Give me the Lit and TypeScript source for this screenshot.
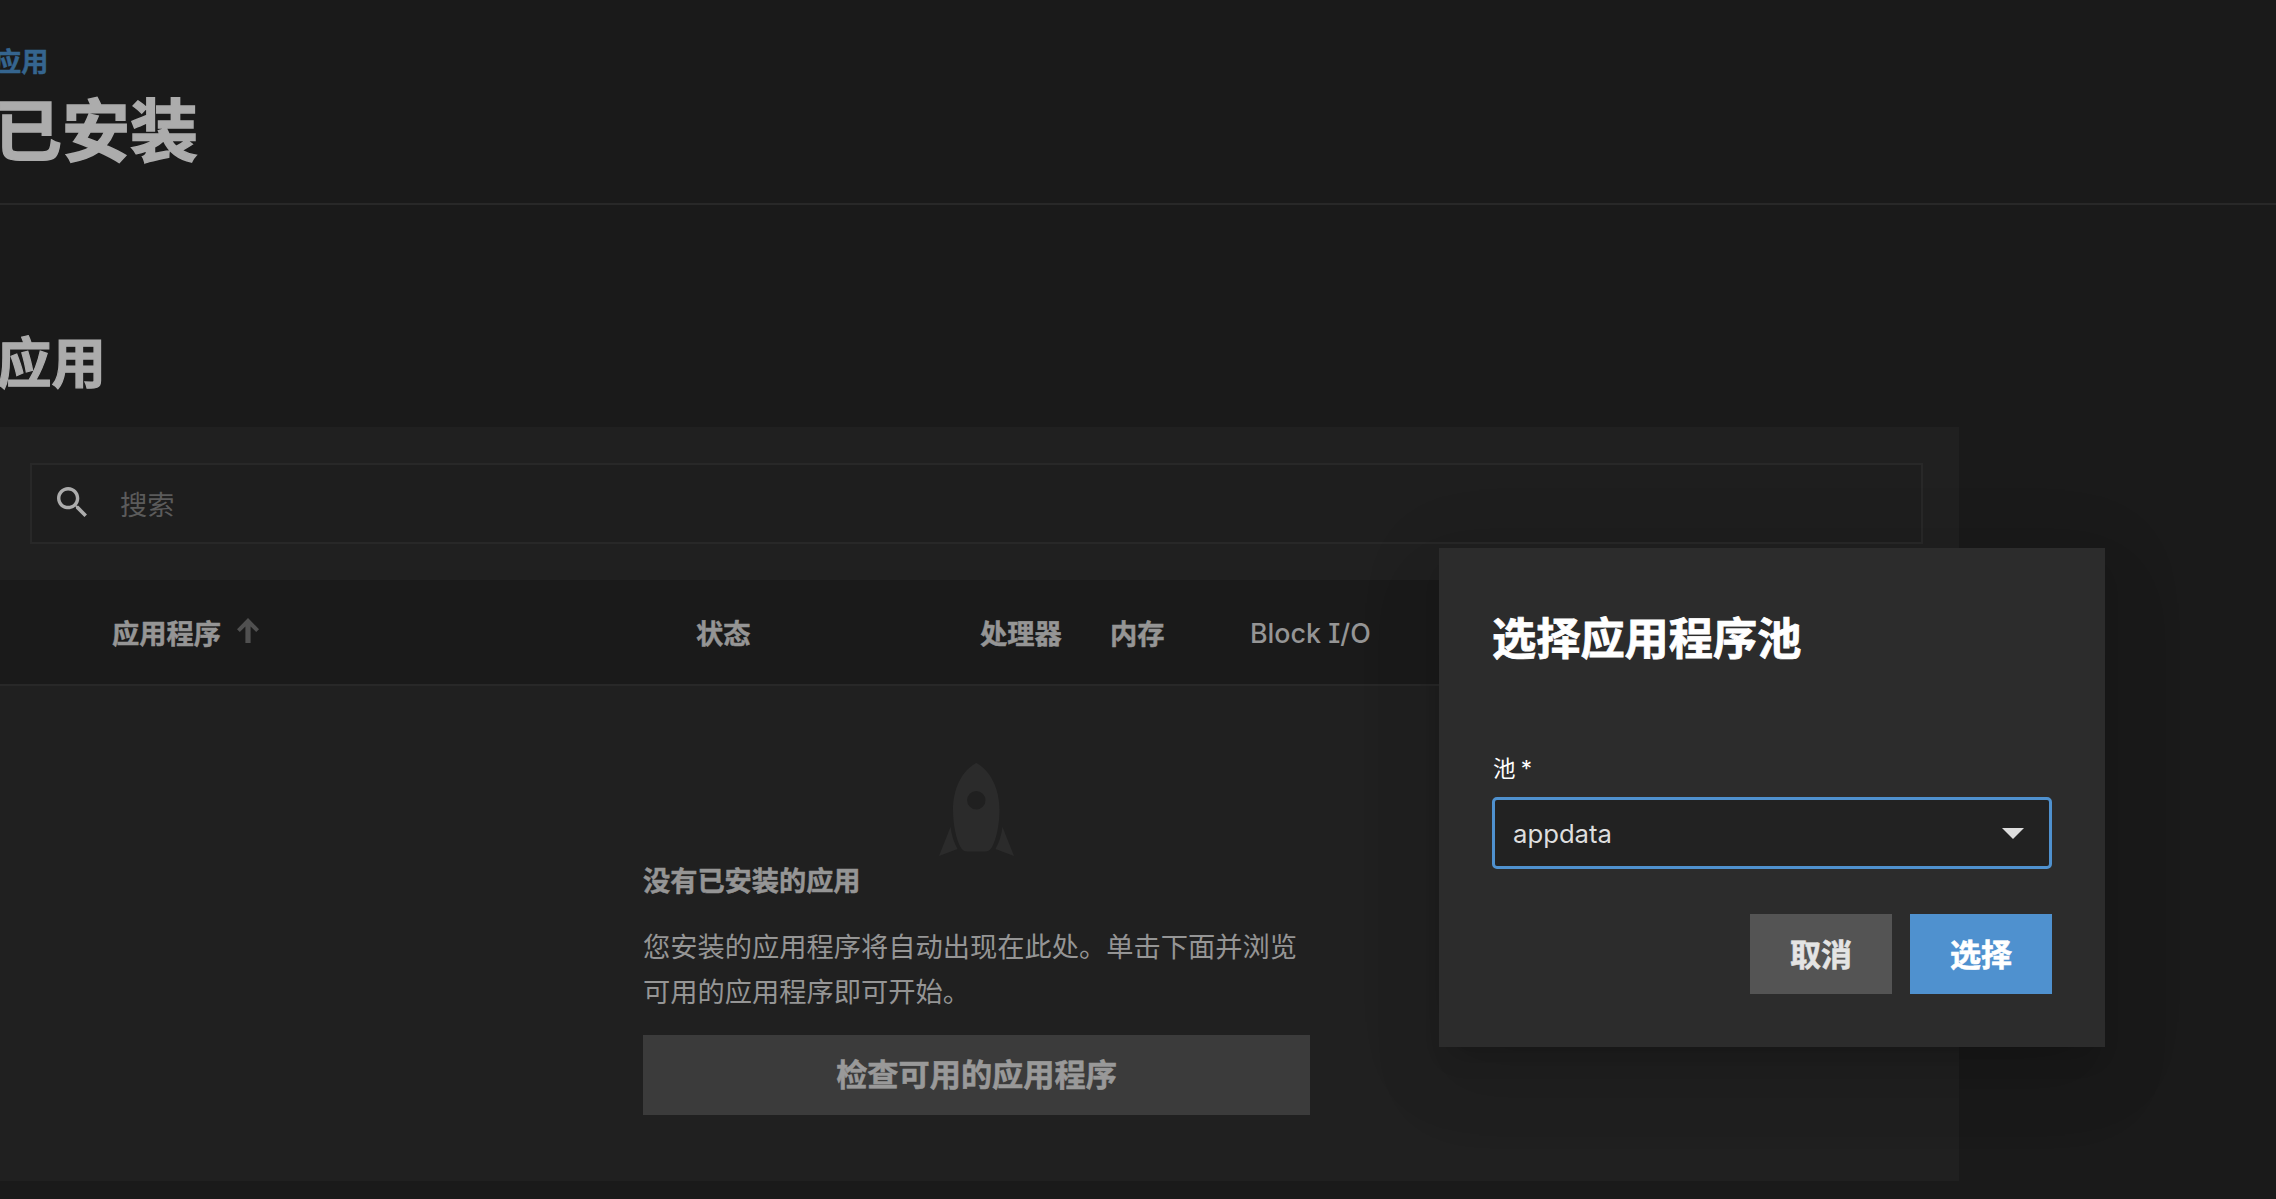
import { html, css, svg, LitElement } from 'lit';
import { customElement, property } from 'lit/decorators.js';

const searchIcon = svg`
  <path
    d="M15.5 14h-.79l-.28-.27C15.41 12.59 16 11.11 16 9.5 16 5.91 13.09 3 9.5 3S3 5.91 3 9.5 5.91 16 9.5 16c1.61 0 3.09-.59 4.23-1.57l.27.28v.79l5 4.99L20.49 19l-4.99-5zm-6 0C7.01 14 5 11.99 5 9.5S7.01 5 9.5 5 14 7.01 14 9.5 11.99 14 9.5 14z"
  />
`;

@customElement('select-pool-dialog')
export class SelectPoolDialog extends LitElement {
  @property({ type: String }) pool = 'appdata';

  render() {
    return html`
      <h1 class="title">选择应用程序池</h1>
      <div class="label">池 <span class="required">*</span></div>
      <div class="select">
        <span>${this.pool}</span>
        <span class="arrow"></span>
      </div>
      <div class="actions">
        <button class="cancel">取消</button>
        <button class="primary">选择</button>
      </div>
    `;
  }

  static styles = css`
    :host {
      display: flex;
      flex-direction: column;
      box-sizing: border-box;
      width: 666px;
      height: 499px;
      padding: 61px 53px 52px;
      background: #2c2c2c;
      box-shadow:
        0 19px 26px -12px rgba(0, 0, 0, 0.14),
        0 41px 65px 5px rgba(0, 0, 0, 0.08),
        0 15px 78px 14px rgba(0, 0, 0, 0.06);
    }

    .title {
      margin: 0;
      font-size: 44.2px;
      line-height: 60px;
      font-weight: 700;
      color: #fff;
      -webkit-text-stroke: 0.8px;
    }

    .label {
      margin: 83px 0 0 1px;
      font-size: 22.5px;
      line-height: 34px;
      color: #fff;
    }

    .required {
      margin-left: -1px;
    }

    .select {
      display: flex;
      align-items: center;
      justify-content: space-between;
      box-sizing: border-box;
      height: 72px;
      margin-top: 11px;
      padding: 0 25px 0 18px;
      border: 3px solid #4f91cf;
      border-radius: 5px;
      background: #222;
      color: #dedede;
      font-size: 25.7px;
    }

    .arrow {
      border: 11px solid transparent;
      border-top: 11px solid #dedede;
      border-bottom: 0;
    }

    .actions {
      display: flex;
      justify-content: flex-end;
      gap: 18px;
      margin-top: 45px;
    }

    button {
      width: 142px;
      height: 80px;
      padding: 0 0 4px;
      border: 0;
      font: inherit;
      font-size: 31px;
      font-weight: 700;
      -webkit-text-stroke: 0.6px;
    }

    .cancel {
      background: #545454;
      color: #e4e4e4;
    }

    .primary {
      background: #4f91cf;
      color: #fff;
    }
  `;
}

@customElement('app-root')
export class AppRoot extends LitElement {
  render() {
    return html`
      <header>
        <a class="breadcrumb">应用</a>
        <h1>已安装</h1>
      </header>
      <main>
        <h2>应用</h2>
        <section class="card">
          <div class="search">
            <svg viewBox="3 3 17.49 17.49">${searchIcon}</svg>
            <span>搜索</span>
          </div>
          <div class="table-header">
            <span class="name">
              应用程序
              <svg viewBox="0 0 22 25">
                <path d="M11 0 22 11.2 19.2 14 13.6 8.5V25H8.4V8.5L2.8 14 0 11.2z" />
              </svg>
            </span>
            <span>状态</span>
            <span>处理器</span>
            <span>内存</span>
            <span class="latin">Block I/O</span>
          </div>
          <div class="empty">
            <svg class="rocket" viewBox="0 0 75 93">
              <path
                fill-rule="evenodd"
                d="M37.3 0C52 8 60.500 26 60.500 47C60.500 62 57 77 53 84Q50.500 88.500 46 88.500H28.500Q24 88.500 21.500 84C17.500 77 14 62 14 47C14 26 22.500 8 37.300 0ZM37.300 28A9.200 9.200 0 1 0 37.300 46.400A9.200 9.200 0 1 0 37.300 28Z"
              />
              <path d="M11.500 64 0 93 18.500 86Q13 76 11.500 64ZM63.500 64 75 93 56.500 86Q62 76 63.500 64Z" />
            </svg>
            <h3>没有已安装的应用</h3>
            <p>您安装的应用程序将自动出现在此处。单击下面并浏览可用的应用程序即可开始。</p>
            <button>检查可用的应用程序</button>
          </div>
        </section>
      </main>
      <select-pool-dialog class="dialog"></select-pool-dialog>
    `;
  }

  static styles = css`
    :host {
      position: relative;
      display: block;
      box-sizing: border-box;
      width: 100%;
      height: 1199px;
      overflow: hidden;
      background: #1a1a1a;
      color: #959595;
      font-family: Inter, 'Noto Sans CJK SC', sans-serif;
      font-feature-settings: 'cv08';
      font-size: 27.25px;
    }

    h1,
    h2,
    h3,
    p {
      margin: 0;
    }

    header {
      box-sizing: border-box;
      height: 205px;
      padding-top: 43px;
      border-bottom: 2px solid #282828;
    }

    .breadcrumb {
      display: block;
      margin-left: -6px;
      font-size: 27.2px;
      line-height: 40px;
      font-weight: 700;
      color: #35658f;
      -webkit-text-stroke: 0.5px;
    }

    header h1 {
      margin-left: -6px;
      font-size: 68px;
      line-height: 96px;
      color: #acacac;
      -webkit-text-stroke: 1.5px;
    }

    h2 {
      padding-top: 122px;
      margin-left: -3px;
      font-size: 54.4px;
      line-height: 72px;
      color: #acacac;
      -webkit-text-stroke: 1.2px;
    }

    .card {
      box-sizing: border-box;
      width: 1959px;
      height: 754px;
      margin-top: 28px;
      padding-top: 36px;
      background: #202020;
    }

    .search {
      display: flex;
      align-items: center;
      gap: 33px;
      box-sizing: border-box;
      width: 1893px;
      height: 81px;
      margin-left: 30px;
      padding: 0 0 2px 25px;
      border: 2px solid #282828;
      background: #1e1e1e;
      color: #5b5b5b;
    }

    .search svg {
      width: 30px;
      height: 30px;
      margin-top: -1px;
      fill: #acacac;
    }

    .table-header {
      display: grid;
      grid-template-columns: 584px 284px 130px 140px 1fr;
      align-items: center;
      box-sizing: border-box;
      height: 106px;
      margin-top: 36px;
      padding-left: 112px;
      border-bottom: 2px solid #282828;
      background: #1a1a1a;
      font-weight: 700;
      -webkit-text-stroke: 0.5px;
    }

    .name {
      display: flex;
      align-items: center;
      gap: 16px;
    }

    .name svg {
      width: 22px;
      height: 25px;
      margin-top: -3px;
      fill: #505050;
    }

    .latin {
      padding-top: 2px;
      font-size: 26.8px;
      font-weight: 500;
      -webkit-text-stroke: 0;
    }

    .empty {
      display: flex;
      flex-direction: column;
      width: 667px;
      margin-left: 643px;
      padding-top: 77px;
    }

    .rocket {
      align-self: center;
      width: 75px;
      height: 93px;
      fill: #2b2b2b;
    }

    h3 {
      margin-top: 6px;
      font-size: 27.2px;
      line-height: 40px;
      -webkit-text-stroke: 0.5px;
    }

    p {
      margin-top: 23px;
      line-height: 45.3px;
    }

    .empty button {
      height: 80px;
      margin-top: 19px;
      padding: 0 0 4px;
      border: 0;
      background: #3b3b3b;
      color: #999;
      font: inherit;
      font-size: 31.2px;
      font-weight: 700;
      -webkit-text-stroke: 0.6px;
    }

    .dialog {
      position: absolute;
      top: 548px;
      left: 1439px;
    }
  `;
}
